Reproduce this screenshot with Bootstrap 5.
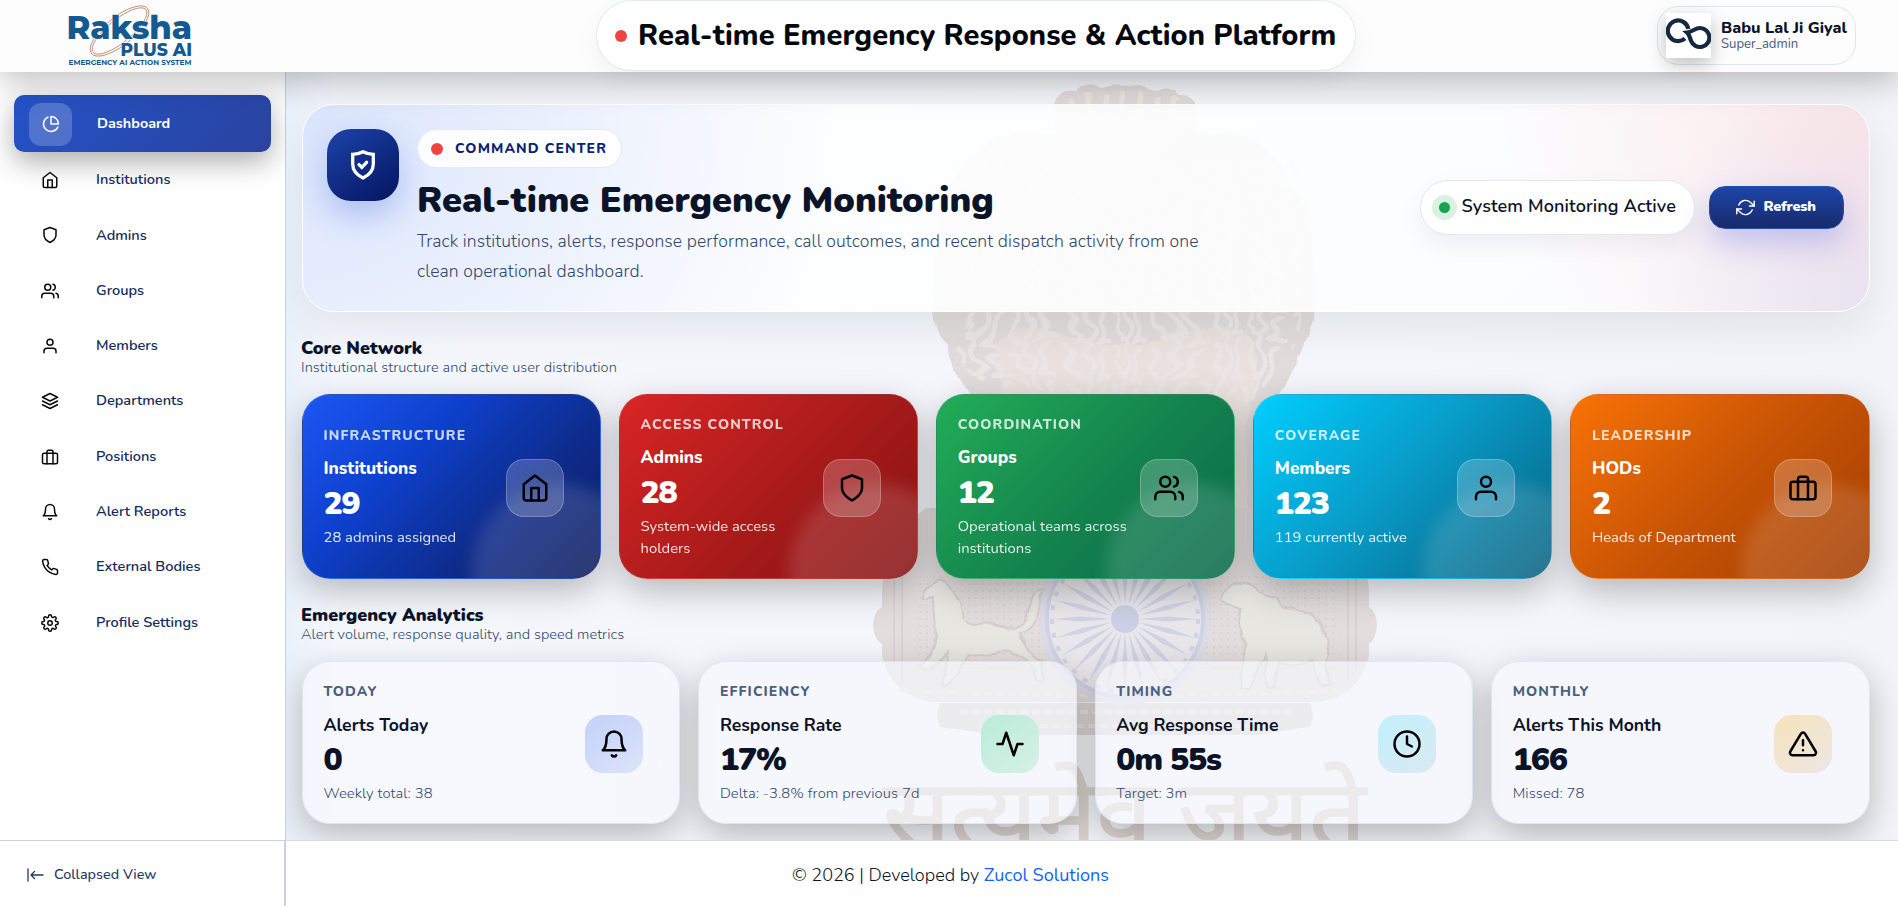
<!DOCTYPE html>
<html lang="en">
<head>
    <meta charset="UTF-8">
    <meta name="viewport" content="width=device-width, initial-scale=1.0">
    <title>Raksha Plus AI - Dashboard</title>
    <link href="https://cdn.jsdelivr.net/npm/bootstrap@5.3.0/dist/css/bootstrap.min.css" rel="stylesheet">
    <style>
        body { font-family: Nunito, Lato, "Open Sans", sans-serif; color: #0b1329; background: #fff; overflow: hidden; }
        .app { height: 100vh; }
        .app-body { min-height: 0; }
        .ico { fill: none; stroke: currentColor; stroke-width: 2; stroke-linecap: round; stroke-linejoin: round; flex: none; }

        /* Header */
        .topbar { height: 72px; background: #fdfdfe; box-shadow: 0 10px 32px rgba(0,0,0,.24); z-index: 5; flex: none; }
        .brand-logo { width: 130px; height: 72px; margin-left: 65px; }
        .title-pill { height: 71px; width: 760px; margin-left: 401px; border: 1px solid #e2e8f4; border-radius: 36px; background: #fff; box-shadow: 0 8px 24px rgba(15,23,42,.05); padding-left: 18px; gap: 11px; }
        .title-text { font-size: 29px; font-weight: 800; letter-spacing: .1px; color: #05070d; }
        .live-dot { width: 12px; height: 12px; border-radius: 50%; background: #ef4444; flex: none; }
        .user-pill { width: 199px; height: 59px; border: 1px solid #dfe6f1; border-radius: 22px; padding-left: 8px; margin: 6px 42px 0 auto; gap: 10px; }
        .user-pic { width: 45px; height: 45px; background: #fff; box-shadow: 0 6px 18px rgba(0,0,0,.25); }
        .user-name { font-size: 16.1px; font-weight: 800; line-height: 18px; }
        .user-role { font-size: 13.1px; line-height: 15px; color: #475b7c; }

        /* Sidebar */
        .side { width: 286px; flex: none; background: #fff; border-right: 1px solid #cbd0de; }
        .side-nav { padding: 23px 14px 0; }
        .side-link { height: 55.3px; padding: 1px 0 0 14px; color: #132a5e; font-size: 14.55px; font-weight: 600; text-decoration: none; }
        .side-link .ico-box { width: 43px; height: 43px; border-radius: 12px; margin-right: 25px; color: #0a0a0a; }
        .side-link.current { height: 57px; padding-left: 15px; border-radius: 10px; color: #fff; font-size: 14.4px; font-weight: 700; background: linear-gradient(135deg, #2453c8, #2a439f); box-shadow: 0 10px 28px rgba(0,0,0,.32); }
        .side-link.current .ico-box { background: rgba(255,255,255,.2); color: #fff; }
        .side-foot { height: 66px; border-top: 1px solid #cbd0de; border-right: 1px solid #cbd0de; font-size: 14.4px; color: #233a66; padding: 3px 0 0 26px; font-weight: 500; gap: 10px; }
        .side-foot .ico { stroke-width: 1.3; }

        /* Main area */
        .stage { background: linear-gradient(90deg, #eaf0fb 0, #f4f7fc 3%, #f4f6fb 60%, #f3f4f9 100%); overflow: hidden; }
        .emblem { position: absolute; inset: 0; }
        .content-pad { padding: 32px 28.4px 0 16px; }
        .hero { height: 208px; border: 1px solid #fff; border-radius: 32px; padding: 24px;
            background: radial-gradient(circle at 0 0, rgba(37,99,235,.17), transparent 34%),
                        radial-gradient(circle at 100% 0, rgba(239,68,68,.12), rgba(239,68,68,.06) 180px, transparent 370px),
                        radial-gradient(circle at 100% 100%, rgba(60,80,220,.10), rgba(60,80,220,.05) 120px, transparent 240px),
                        linear-gradient(135deg, rgba(255,255,255,.95), rgba(252,253,255,.9));
            box-shadow: 0 16px 40px rgba(15,23,42,.08); }
        .hero-icon { width: 72px; height: 72px; border-radius: 24px; color: #fff; background: linear-gradient(145deg, #1c43ab, #04155e); box-shadow: 0 14px 32px rgba(37,80,220,.28); flex: none; }
        .hero-icon .ico { stroke-width: 3.3; stroke-linejoin: miter; }
        .hero-copy { margin-left: 18px; }
        .eyebrow-pill { height: 39px; width: 205px; border: 1px solid #e4e9f3; border-radius: 20px; background: rgba(255,255,255,.9); color: #0b1f73; font-size: 14px; font-weight: 800; letter-spacing: 1.12px; padding-left: 13px; gap: 12px; }
        .hero-title { font-size: 36px; font-weight: 900; line-height: 42px; margin: 12px 0 4px; color: #0b1329; }
        .hero-text { font-size: 17.6px; font-weight: 300; letter-spacing: .09px; line-height: 30px; color: #33496d; width: 800px; margin: 0; }
        .hero-actions { gap: 14px; margin-bottom: 2px; padding-right: 1px; }
        .status-pill { width: 275px; height: 55px; border: 1px solid #e2e7f3; border-radius: 28px; background: #fff; box-shadow: 0 10px 24px rgba(15,23,42,.06); font-size: 18.1px; font-weight: 600; letter-spacing: .1px; padding-left: 11px; gap: 5px; }
        .halo { width: 25px; height: 25px; border-radius: 50%; background: #d9f0e2; }
        .halo span { width: 11px; height: 11px; border-radius: 50%; background: #16a34a; }
        .btn-refresh { width: 135px; height: 43px; border: 1px solid #2450b4; border-radius: 16px; color: #fff; background: linear-gradient(180deg, #1e45a8, #182a6c); box-shadow: 0 14px 30px rgba(50,70,220,.25); font-size: 14.4px; font-weight: 900; letter-spacing: -.2px; }
        .btn-refresh:hover { color: #fff; background: #182a6c; }
        .btn-refresh .ico { stroke-width: 1.8; }

        .sec-head { padding-top: 26px; margin-left: -1px; }
        .sec-title { font-size: 18px; font-weight: 900; line-height: 20px; margin: 0; }
        .sec-sub { font-size: 14.6px; font-weight: 300; letter-spacing: .05px; line-height: 19px; color: #33496d; margin: 0 0 17px; }

        .tile-grid { display: grid; gap: 18px; }
        .core .tile-grid { grid-template-columns: repeat(5, 1fr); }
        .stats .tile-grid { grid-template-columns: repeat(4, 1fr); }
        .tile-wrap { border-radius: 28px; box-shadow: 0 12px 34px rgba(0,0,0,.26); }
        .tile { position: relative; overflow: hidden; border-radius: 28px; padding: 2px 36.500px 0 20.500px; border: 1px solid transparent; }
        .core .tile { height: 185px; color: #fff; border-color: rgba(255,255,255,.12); }
        .core .tile::after { content: ""; position: absolute; width: 176px; height: 176px; right: -48px; bottom: -82px; border-radius: 50%; background: rgba(255,255,255,.13); filter: blur(8px); }
        .tile-eyebrow { font-size: 14px; font-weight: 800; line-height: 20px; letter-spacing: 1.1px; opacity: .78; margin-bottom: 11px; }
        .tile-name { font-size: 17.2px; font-weight: 800; line-height: 24px; margin-bottom: 6px; }
        .tile-num { font-size: 32px; font-weight: 900; line-height: 34px; letter-spacing: -1.2px; margin-bottom: 5px; }
        .tile-note { font-size: 14.8px; line-height: 22px; opacity: .88; margin-bottom: 2px; }
        .core .tile-copy { width: 176px; }
        .tile-icon { width: 58px; height: 58px; border-radius: 18px; color: #000; flex: none; }
        .core .tile-icon { background: rgba(255,255,255,.2); border: 1px solid rgba(255,255,255,.22); z-index: 1; }

        .t-blue { background: linear-gradient(135deg, #1d56f5, #0d40cb 35%, #0e2b8a 68%, #0b1c5c); }
        .t-red { background: linear-gradient(135deg, #d92525, #a81a1a 55%, #861414); }
        .t-green { background: linear-gradient(135deg, #22ad57, #13824d 55%, #0a6a4c); }
        .t-cyan { background: linear-gradient(135deg, #00cfff, #0898c4 50%, #07617f); }
        .t-orange { background: linear-gradient(135deg, #f97306, #c85405 50%, #a33d00); }

        .stats .tile { height: 163px; background: rgba(246,248,253,.6); border-color: rgba(215,224,235,.75); }
        .stats .tile-name { font-weight: 700; font-size: 17.6px; }
        .stats .tile-eyebrow { opacity: 1; color: #4b6080; }
        .stats .tile-note { opacity: 1; color: #33496d; font-weight: 300; letter-spacing: .07px; }
        .i-blue { background: linear-gradient(145deg, #c3d1fa, #dbe4f9); }
        .i-green { background: linear-gradient(145deg, #b9ecd6, #d7f0e8); }
        .i-cyan { background: linear-gradient(145deg, #c0f1fb, #dce9f3); }
        .i-amber { background: linear-gradient(145deg, #f7e4bb, #ece6e6); }

        .page-foot { height: 66px; background: #fff; flex: none; border-top: 1px solid #d9dce2; font-size: 18.1px; font-weight: 300; padding: 4px 283px 0 0; }
        .page-foot a { color: #1463ff; text-decoration: none; font-weight: 400; }
    </style>
</head>
<body>
    <svg width="0" height="0" class="position-absolute">
        <symbol id="pie" viewBox="0 0 24 24"><path d="M21.21 15.89A10 10 0 1 1 8 2.83"/><path d="M22 12A10 10 0 0 0 12 2v10z"/></symbol>
        <symbol id="home" viewBox="0 0 24 24"><path d="M3 9l9-7 9 7v11a2 2 0 0 1-2 2H5a2 2 0 0 1-2-2z"/><path d="M9 22V12h6v10"/></symbol>
        <symbol id="shield" viewBox="0 0 24 24"><path d="M12 22s8-4 8-10V5l-8-3-8 3v7c0 6 8 10 8 10z"/></symbol>
        <symbol id="users" viewBox="0 0 24 24"><path d="M17 21v-2a4 4 0 0 0-4-4H5a4 4 0 0 0-4 4v2"/><circle cx="9" cy="7" r="4"/><path d="M23 21v-2a4 4 0 0 0-3-3.870M16 3.130a4 4 0 0 1 0 7.750"/></symbol>
        <symbol id="user" viewBox="0 0 24 24"><path d="M20 21v-2a4 4 0 0 0-4-4H8a4 4 0 0 0-4 4v2"/><circle cx="12" cy="7" r="4"/></symbol>
        <symbol id="layers" viewBox="0 0 24 24"><path d="M12 2L2 7l10 5 10-5z"/><path d="M2 17l10 5 10-5M2 12l10 5 10-5"/></symbol>
        <symbol id="briefcase" viewBox="0 0 24 24"><rect x="2" y="7" width="20" height="14" rx="2"/><path d="M16 21V5a2 2 0 0 0-2-2h-4a2 2 0 0 0-2 2v16"/></symbol>
        <symbol id="bell" viewBox="0 0 24 24"><path d="M18 8A6 6 0 0 0 6 8c0 7-3 9-3 9h18s-3-2-3-9"/><path d="M13.730 21a2 2 0 0 1-3.460 0"/></symbol>
        <symbol id="phone" viewBox="0 0 24 24"><path d="M22 16.920v3a2 2 0 0 1-2.180 2 19.790 19.790 0 0 1-8.630-3.070 19.500 19.500 0 0 1-6-6 19.790 19.790 0 0 1-3.070-8.670A2 2 0 0 1 4.110 2h3a2 2 0 0 1 2 1.720c.13.960.36 1.900.7 2.810a2 2 0 0 1-.45 2.110L8.090 9.910a16 16 0 0 0 6 6l1.270-1.270a2 2 0 0 1 2.110-.45c.91.340 1.850.57 2.810.7A2 2 0 0 1 22 16.920z"/></symbol>
        <symbol id="gear" viewBox="0 0 24 24"><circle cx="12" cy="12" r="3"/><path d="M19.400 15a1.650 1.650 0 0 0 .33 1.820l.06.060a2 2 0 1 1-2.830 2.830l-.06-.06a1.650 1.650 0 0 0-2.800 1.170V21a2 2 0 0 1-4 0v-.09A1.650 1.650 0 0 0 7.200 19.730l-.06.060a2 2 0 1 1-2.830-2.830l.06-.06A1.650 1.650 0 0 0 3.090 14H3a2 2 0 0 1 0-4h.09A1.650 1.650 0 0 0 4.270 7.200l-.06-.06a2 2 0 1 1 2.830-2.830l.06.060A1.650 1.650 0 0 0 10 3.090V3a2 2 0 0 1 4 0v.09a1.650 1.650 0 0 0 2.800 1.180l.06-.06a2 2 0 1 1 2.830 2.830l-.06.060A1.650 1.650 0 0 0 20.910 10H21a2 2 0 0 1 0 4h-.09A1.650 1.650 0 0 0 19.400 15z"/></symbol>
        <symbol id="pulse" viewBox="0 0 24 24"><path d="M22 12h-4l-3 9L9 3l-3 9H2"/></symbol>
        <symbol id="clock" viewBox="0 0 24 24"><circle cx="12" cy="12" r="10"/><path d="M12 6v6l4 2"/></symbol>
        <symbol id="warn" viewBox="0 0 24 24"><path d="M10.290 3.860L1.820 18a2 2 0 0 0 1.710 3h16.940a2 2 0 0 0 1.710-3L13.710 3.860a2 2 0 0 0-3.420 0zM12 9v4M12 17h.01"/></symbol>
        <symbol id="refresh" viewBox="0 0 24 24"><path d="M23 4v6h-6M1 20v-6h6"/><path d="M3.510 9a9 9 0 0 1 14.850-3.360L23 10M1 14l4.640 4.360A9 9 0 0 0 20.490 15"/></symbol>
    </svg>

    <div class="app d-flex flex-column">
        <!-- Header -->
        <header class="topbar d-flex align-items-start position-relative">
            <svg class="brand-logo" viewBox="65 0 130 72">
                <g fill="none" stroke="#b57f62" stroke-width=".8">
                    <ellipse cx="119.500" cy="31" rx="36" ry="14" transform="rotate(-39 119.500 31)"/>
                    <ellipse cx="119.500" cy="31" rx="34" ry="11.500" transform="rotate(-39 119.500 31)"/>
                </g>
                <g fill="#14598f" font-family="Montserrat, Inter, sans-serif" font-weight="800" stroke="#fdfdfe" stroke-width="1" paint-order="stroke">
                    <text x="66.500" y="39" font-size="33" textLength="125.500" lengthAdjust="spacingAndGlyphs">Raksha</text>
                    <text x="120.500" y="55.500" font-size="17.500" textLength="71.500" lengthAdjust="spacingAndGlyphs">PLUS AI</text>
                    <text x="68.500" y="65" font-size="6.800" font-weight="700" textLength="123" lengthAdjust="spacingAndGlyphs" stroke="none">EMERGENCY AI ACTION SYSTEM</text>
                </g>
            </svg>
            <div class="title-pill d-flex align-items-center">
                <span class="live-dot"></span>
                <span class="title-text text-nowrap">Real-time Emergency Response &amp; Action Platform</span>
            </div>
            <div class="user-pill d-flex align-items-center">
                <svg class="user-pic" viewBox="0 0 45 45" fill="none" stroke="#14283f" stroke-width="4.200">
                    <path d="M19 25.500A10.300 10.300 0 1 1 22.300 16"/>
                    <path d="M21 19.500c5-.5 8-4.500 13-4.500a9.500 9.500 0 1 1-9 12.800c-1.500-4-1.500-6-4-8.300z"/>
                </svg>
                <div>
                    <div class="user-name text-nowrap">Babu Lal Ji Giyal</div>
                    <div class="user-role">Super_admin</div>
                </div>
            </div>
        </header>

        <div class="app-body d-flex flex-grow-1">
            <!-- Sidebar -->
            <aside class="side d-flex flex-column">
                <nav class="side-nav d-flex flex-column flex-grow-1">
                    <a href="#" class="side-link current d-flex align-items-center"><span class="ico-box d-flex align-items-center justify-content-center"><svg class="ico" width="18" height="18"><use href="#pie"/></svg></span>Dashboard</a>
                    <a href="#" class="side-link d-flex align-items-center"><span class="ico-box d-flex align-items-center justify-content-center"><svg class="ico" width="18" height="18"><use href="#home"/></svg></span>Institutions</a>
                    <a href="#" class="side-link d-flex align-items-center"><span class="ico-box d-flex align-items-center justify-content-center"><svg class="ico" width="18" height="18"><use href="#shield"/></svg></span>Admins</a>
                    <a href="#" class="side-link d-flex align-items-center"><span class="ico-box d-flex align-items-center justify-content-center"><svg class="ico" width="18" height="18"><use href="#users"/></svg></span>Groups</a>
                    <a href="#" class="side-link d-flex align-items-center"><span class="ico-box d-flex align-items-center justify-content-center"><svg class="ico" width="18" height="18"><use href="#user"/></svg></span>Members</a>
                    <a href="#" class="side-link d-flex align-items-center"><span class="ico-box d-flex align-items-center justify-content-center"><svg class="ico" width="18" height="18"><use href="#layers"/></svg></span>Departments</a>
                    <a href="#" class="side-link d-flex align-items-center"><span class="ico-box d-flex align-items-center justify-content-center"><svg class="ico" width="18" height="18"><use href="#briefcase"/></svg></span>Positions</a>
                    <a href="#" class="side-link d-flex align-items-center"><span class="ico-box d-flex align-items-center justify-content-center"><svg class="ico" width="18" height="18"><use href="#bell"/></svg></span>Alert Reports</a>
                    <a href="#" class="side-link d-flex align-items-center"><span class="ico-box d-flex align-items-center justify-content-center"><svg class="ico" width="18" height="18"><use href="#phone"/></svg></span>External Bodies</a>
                    <a href="#" class="side-link d-flex align-items-center"><span class="ico-box d-flex align-items-center justify-content-center"><svg class="ico" width="18" height="18"><use href="#gear"/></svg></span>Profile Settings</a>
                </nav>
                <div class="side-foot d-flex align-items-center">
                    <svg class="ico" width="18" height="14" viewBox="0 0 18 14"><path d="M2 1v12M17 7H5M8.500 3.500L5 7l3.500 3.500"/></svg>
                    <span>Collapsed View</span>
                </div>
            </aside>

            <div class="d-flex flex-column flex-grow-1">
                <main class="stage position-relative flex-grow-1">
                    <!-- State emblem behind the content -->
                    <svg class="emblem" width="1612" height="768" viewBox="286 72 1612 768">
                        <defs>
                            <pattern id="curls" width="46" height="38" patternUnits="userSpaceOnUse">
                                <path d="M5 4q10 2 5 12t4 12M22 0q-7 9 2 15t-3 17M39 5q-9 5-4 13t-3 15M14 33q8-2 8 5M30 36q8-4 13-1" fill="none" stroke="#ebe6e3" stroke-width="5" stroke-linecap="round"/>
                            </pattern>
                            <pattern id="studs" width="7" height="7" patternUnits="userSpaceOnUse"><circle cx="3" cy="3" r="1" fill="#d8d1cf"/></pattern>
                            <filter id="ruffle" x="-5%" y="-5%" width="110%" height="110%">
                                <feTurbulence type="fractalNoise" baseFrequency=".016" numOctaves="1" seed="7"/>
                                <feDisplacementMap in="SourceGraphic" scale="50" xChannelSelector="R" yChannelSelector="G"/>
                            </filter>
                            <filter id="rough" x="-5%" y="-5%" width="110%" height="110%">
                                <feTurbulence type="fractalNoise" baseFrequency=".05" numOctaves="2" seed="3"/>
                                <feDisplacementMap in="SourceGraphic" scale="9" xChannelSelector="R" yChannelSelector="G"/>
                            </filter>
                        </defs>
                        <g filter="url(#rough)">
                            <path fill="#e1dcdb" d="M1056 106q-4-16 18-14q16-9 28-4q14-5 28-1q14-3 25 2q16-3 24 5q16 0 16 14v26h50q60 40 66 114q12 60-6 95q-16 40-34 62q-4 170 70 190H908q72-20 70-190q-20-20-32-62q-20-20-10-95q0-74 66-114h54z"/>
                            <path fill="#e8e1dd" d="M1000 380q-20-60 50-50q70 30 144 0q80-10 60 50q-20 120 10 200H990q30-80 10-200z"/>
                            <path fill="none" stroke="#ece6e0" stroke-width="6" stroke-linecap="round" d="M1070 102l8 12M1088 97l4 16M1106 95l2 18M1123 94v18M1141 95l-2 18M1158 99l-4 14M1176 99l-8 16"/>
                        </g>
                        <path filter="url(#ruffle)" fill="url(#curls)" d="M950 160h350q12 110-8 190q-14 30-34 44H994q-16-20-28-52q-24-80-16-182z"/>
                        <g>
                            <path fill="#e3dedd" d="M882 590q4-54 44-82h400q38 28 43 82v17q7 4 8 18q-1 14-8 19v12q-10 40-50 46H932q-40-6-50-46v-12q-8-4-9-19q1-14 9-18z"/>
                            <path fill="none" stroke="#d9d3d2" stroke-width="2" d="M894 580v84M902 560v120M1348 560v120M1356 570v100"/>
                            <path fill="url(#studs)" d="M915 575h425v95H915z"/>
                            <path fill="#ddd8d7" d="M940 703h370q6 14 0 24q-30 4-50 8H996q-26-4-56-8q-6-10 0-24z"/>
                            <path fill="none" stroke="#eae4e2" stroke-width="4" stroke-dasharray="8 4" d="M900 690q220 12 450 0M960 712h330M980 726h290"/>
                            <!-- horse -->
                            <path filter="url(#rough)" fill="#e7e6e0" stroke="#d4cfcd" stroke-width="2" d="M922 600l8-14q8-10 18-4l12 20q2 22 18 22q22-2 36 6q14-6 16-24q4-14 12-18q-2 14-6 30q-4 14-18 16q8 18 24 28v20l-5-1-1-14-24-16q-24 8-42 2q-16 22-22 34h-6l6-34q-12 14-26 16l-2-5q18-10 16-30q-8-20-2-38l-8 4z"/>
                            <!-- bull -->
                            <path filter="url(#rough)" fill="#e7e6e0" stroke="#d4cfcd" stroke-width="2" d="M1222 602q-2-16 16-20q16-2 22 12q16-2 24 14q30 2 40 20q8 16 2 34l2 22h-8l-8-24q-14 8-34 4l-2 22h-8l-4-30-16 32h-8l6-40q-12-20-4-38z"/>
                            <circle cx="1125" cy="619" r="86" fill="#dcdce6"/>
                            <circle cx="1125" cy="619" r="78" fill="#e9e7e9" stroke="#d0d3e6" stroke-width="4"/>
                            <g id="spokes" fill="#cfd3e6"></g>
                            <circle cx="1125" cy="619" r="73" fill="none" stroke="#d0d3e5" stroke-width="4" stroke-dasharray="5 9"/>
                            <circle cx="1125" cy="619" r="14" fill="#cbd0e6"/>
                        </g>
                        <text x="883" y="848" font-family="'Noto Sans Devanagari', 'Noto Sans', sans-serif" font-size="96" fill="#ddd5d0" stroke="#ddd5d0" stroke-width="1.500" textLength="483" lengthAdjust="spacingAndGlyphs">सत्यमेव जयते</text>
                    </svg>

                    <div class="content-pad position-relative">
                        <section class="hero d-flex">
                            <div class="hero-icon d-flex align-items-center justify-content-center">
                                <svg class="ico" width="36" height="36" viewBox="0 0 36 36"><path d="M18 4.800q-5 2.600-10.300 2.600V17q0 9 10.300 14Q28.300 26 28.300 17V7.400Q23 7.400 18 4.800z"/><path d="M14 17.600l2.800 2.700 4.800-5"/></svg>
                            </div>
                            <div class="hero-copy">
                                <div class="eyebrow-pill d-flex align-items-center"><span class="live-dot"></span><span class="text-nowrap">COMMAND CENTER</span></div>
                                <h1 class="hero-title">Real-time Emergency Monitoring</h1>
                                <p class="hero-text">Track institutions, alerts, response performance, call outcomes, and recent dispatch activity from one clean operational dashboard.</p>
                            </div>
                            <div class="hero-actions d-flex align-items-center ms-auto">
                                <div class="status-pill d-flex align-items-center"><span class="halo d-flex align-items-center justify-content-center"><span></span></span><div class="text-nowrap">System Monitoring Active</div></div>
                                <button type="button" class="btn btn-refresh d-flex align-items-center justify-content-center gap-2 p-0"><svg class="ico" width="19" height="19"><use href="#refresh"/></svg>Refresh</button>
                            </div>
                        </section>

                        <!-- Core Network -->
                        <section class="core">
                            <div class="sec-head">
                                <h2 class="sec-title">Core Network</h2>
                                <p class="sec-sub">Institutional structure and active user distribution</p>
                            </div>
                            <div class="tile-grid">
                                <div class="tile-wrap"><div class="tile t-blue d-flex align-items-center justify-content-between">
                                    <div class="tile-copy"><div class="tile-eyebrow">INFRASTRUCTURE</div><div class="tile-name">Institutions</div><div class="tile-num">29</div><div class="tile-note">28 admins assigned</div></div>
                                    <div class="tile-icon d-flex align-items-center justify-content-center"><svg class="ico" width="30" height="30"><use href="#home"/></svg></div>
                                </div></div>
                                <div class="tile-wrap"><div class="tile t-red d-flex align-items-center justify-content-between">
                                    <div class="tile-copy"><div class="tile-eyebrow">ACCESS CONTROL</div><div class="tile-name">Admins</div><div class="tile-num">28</div><div class="tile-note">System-wide access holders</div></div>
                                    <div class="tile-icon d-flex align-items-center justify-content-center"><svg class="ico" width="30" height="30"><use href="#shield"/></svg></div>
                                </div></div>
                                <div class="tile-wrap"><div class="tile t-green d-flex align-items-center justify-content-between">
                                    <div class="tile-copy"><div class="tile-eyebrow">COORDINATION</div><div class="tile-name">Groups</div><div class="tile-num">12</div><div class="tile-note">Operational teams across institutions</div></div>
                                    <div class="tile-icon d-flex align-items-center justify-content-center"><svg class="ico" width="30" height="30"><use href="#users"/></svg></div>
                                </div></div>
                                <div class="tile-wrap"><div class="tile t-cyan d-flex align-items-center justify-content-between">
                                    <div class="tile-copy"><div class="tile-eyebrow">COVERAGE</div><div class="tile-name">Members</div><div class="tile-num">123</div><div class="tile-note">119 currently active</div></div>
                                    <div class="tile-icon d-flex align-items-center justify-content-center"><svg class="ico" width="30" height="30"><use href="#user"/></svg></div>
                                </div></div>
                                <div class="tile-wrap"><div class="tile t-orange d-flex align-items-center justify-content-between">
                                    <div class="tile-copy"><div class="tile-eyebrow">LEADERSHIP</div><div class="tile-name">HODs</div><div class="tile-num">2</div><div class="tile-note">Heads of Department</div></div>
                                    <div class="tile-icon d-flex align-items-center justify-content-center"><svg class="ico" width="30" height="30"><use href="#briefcase"/></svg></div>
                                </div></div>
                            </div>
                        </section>

                        <!-- Emergency Analytics -->
                        <section class="stats">
                            <div class="sec-head">
                                <h2 class="sec-title">Emergency Analytics</h2>
                                <p class="sec-sub">Alert volume, response quality, and speed metrics</p>
                            </div>
                            <div class="tile-grid">
                                <div class="tile-wrap"><div class="tile d-flex align-items-center justify-content-between">
                                    <div><div class="tile-eyebrow">TODAY</div><div class="tile-name">Alerts Today</div><div class="tile-num">0</div><div class="tile-note">Weekly total: 38</div></div>
                                    <div class="tile-icon i-blue d-flex align-items-center justify-content-center"><svg class="ico" width="30" height="30"><use href="#bell"/></svg></div>
                                </div></div>
                                <div class="tile-wrap"><div class="tile d-flex align-items-center justify-content-between">
                                    <div><div class="tile-eyebrow">EFFICIENCY</div><div class="tile-name">Response Rate</div><div class="tile-num">17%</div><div class="tile-note">Delta: -3.8% from previous 7d</div></div>
                                    <div class="tile-icon i-green d-flex align-items-center justify-content-center"><svg class="ico" width="30" height="30"><use href="#pulse"/></svg></div>
                                </div></div>
                                <div class="tile-wrap"><div class="tile d-flex align-items-center justify-content-between">
                                    <div><div class="tile-eyebrow">TIMING</div><div class="tile-name">Avg Response Time</div><div class="tile-num">0m 55s</div><div class="tile-note">Target: 3m</div></div>
                                    <div class="tile-icon i-cyan d-flex align-items-center justify-content-center"><svg class="ico" width="30" height="30"><use href="#clock"/></svg></div>
                                </div></div>
                                <div class="tile-wrap"><div class="tile d-flex align-items-center justify-content-between">
                                    <div><div class="tile-eyebrow">MONTHLY</div><div class="tile-name">Alerts This Month</div><div class="tile-num">166</div><div class="tile-note">Missed: 78</div></div>
                                    <div class="tile-icon i-amber d-flex align-items-center justify-content-center"><svg class="ico" width="30" height="30"><use href="#warn"/></svg></div>
                                </div></div>
                            </div>
                        </section>
                    </div>
                </main>
                <footer class="page-foot d-flex align-items-center justify-content-center"><span>© 2026 | Developed by <a href="#">Zucol Solutions</a></span></footer>
            </div>
        </div>
    </div>

    <script src="https://cdn.jsdelivr.net/npm/bootstrap@5.3.0/dist/js/bootstrap.bundle.min.js"></script>
    <script>
        // Ashoka wheel: 24 tapered spokes
        const spokes = document.getElementById('spokes');
        for (let i = 0; i < 24; i++) {
            const p = document.createElementNS('http://www.w3.org/2000/svg', 'path');
            p.setAttribute('d', 'M1125 605l2.600-30-2.600-28-2.600 28z');
            p.setAttribute('transform', `rotate(${i * 15} 1125 619)`);
            spokes.appendChild(p);
        }
    </script>
</body>
</html>
